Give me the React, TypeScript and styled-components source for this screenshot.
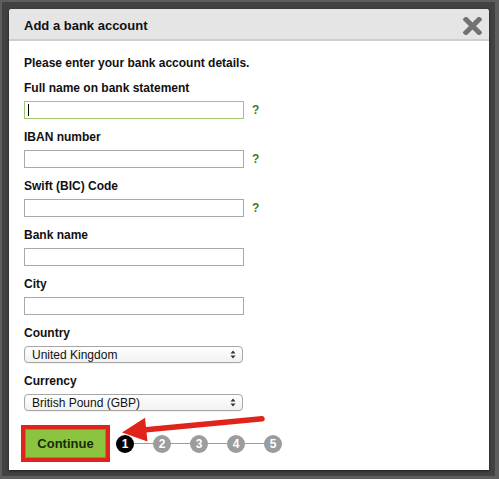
import React from "react";
import styled, {createGlobalStyle} from "styled-components";

const fields = [
	{label: "Full name on bank statement", help: true, focused: true},
	{label: "IBAN number", help: true},
	{label: "Swift (BIC) Code", help: true},
	{label: "Bank name"},
	{label: "City"},
];

const selects = [
	{label: "Country", value: "United Kingdom"},
	{label: "Currency", value: "British Pound (GBP)"},
];

const steps = [1, 2, 3, 4, 5];

const App = () => {
	return (
		<>
			<GlobalStyle/>
			<Frame>
				<Panel>
					<Header>
						<Title>Add a bank account</Title>
						<CloseButton aria-label="Close">
							<svg width="19" height="18" viewBox="0 0 19 18">
								<path d="M3 2.5 L16 15.5 M16 2.5 L3 15.5" stroke="#727272" strokeWidth="5" strokeLinecap="square"/>
							</svg>
						</CloseButton>
					</Header>
					<Body>
						<Intro>Please enter your bank account details.</Intro>
						{fields.map((f) => (
							<Field key={f.label}>
								<Label>{f.label}</Label>
								<InputRow>
									<InputBox $focused={!!f.focused}>
										{f.focused && <Caret/>}
										<TextInput type="text"/>
									</InputBox>
									{f.help && <Help>?</Help>}
								</InputRow>
							</Field>
						))}
						{selects.map((s) => (
							<Field key={s.label}>
								<Label>{s.label}</Label>
								<SelectBox>
									<Select defaultValue={s.value}>
										<option>{s.value}</option>
									</Select>
									<svg width="6" height="9" viewBox="0 0 6 9">
										<path d="M0.5 3.5 L3 0.5 L5.5 3.5 Z M0.5 5.5 L3 8.5 L5.5 5.5 Z" fill="#333"/>
									</svg>
								</SelectBox>
							</Field>
						))}
						<Footer>
							<ContinueButton>Continue</ContinueButton>
							<Steps>
								{steps.map((n, i) => (
									<React.Fragment key={n}>
										{i > 0 && <StepLine/>}
										<Step $active={n === 1}>{n}</Step>
									</React.Fragment>
								))}
							</Steps>
						</Footer>
					</Body>
					<Arrow width="160" height="40" viewBox="0 0 160 40">
						<path d="M36 24.8 L152 13.8" stroke="#e1241b" strokeWidth="5.5" strokeLinecap="round"/>
						<polygon points="12,27.5 35,12.8 37.5,36.5" fill="#e1241b"/>
					</Arrow>
				</Panel>
			</Frame>
		</>
	)
}

export default App


const GlobalStyle = createGlobalStyle`
  body {
    margin: 0;
    background: #424242;
    font-family: "Liberation Sans", Arial, Helvetica, sans-serif;
  }
`

const Frame = styled.div`
  width: 499px;
  height: 479px;
  box-sizing: border-box;
  border: 2px solid #5e5e5e;
  border-right-width: 4px;
  border-bottom-width: 3px;
  background: #424242;
  padding: 7px 6px 6px 7px;
`

const Panel = styled.div`
  position: relative;
  width: 100%;
  height: 100%;
  background: #fff;
  border-radius: 3px 3px 0 0;
  box-shadow: 0 1px 3px rgba(0, 0, 0, 0.6);
  display: flex;
  flex-direction: column;
`

const Header = styled.div`
  height: 32px;
  display: flex;
  align-items: center;
  justify-content: space-between;
  padding: 2px 7px 0 15px;
  box-sizing: border-box;
  background: #e5e5e5;
  border-bottom: 2px solid #cecece;
  border-radius: 3px 3px 0 0;
`

const Title = styled.h1`
  margin: 0;
  font-size: 13px;
  font-weight: 700;
  color: #111;
`

const CloseButton = styled.button`
  border: none;
  background: none;
  padding: 0;
  margin-top: 1px;
  display: flex;
  cursor: pointer;
`

const Body = styled.div`
  display: flex;
  flex-direction: column;
  padding: 15px 15px 0 15px;
`

const Intro = styled.p`
  margin: 0 0 10px 0;
  font-size: 12px;
  line-height: 15px;
  font-weight: 700;
  color: #111;
`

const Field = styled.div`
  display: flex;
  flex-direction: column;
  gap: 5px;
  margin-bottom: 11px;
`

const Label = styled.label`
  font-size: 12px;
  line-height: 15px;
  font-weight: 700;
  color: #111;
`

const InputRow = styled.div`
  display: flex;
  align-items: center;
`

const InputBox = styled.div<{ $focused: boolean }>`
  width: 220px;
  height: 18px;
  box-sizing: border-box;
  display: flex;
  align-items: center;
  padding-left: 3px;
  border: 1px solid ${({$focused}) => $focused ? "#9cc86a" : "#a9a9a9"};
  background: #fff;
`

const Caret = styled.span`
  width: 1px;
  height: 12px;
  background: #000;
`

const TextInput = styled.input`
  flex: 1;
  min-width: 0;
  border: none;
  outline: none;
  background: transparent;
  padding: 0;
  font-size: 12px;
  font-family: inherit;
`

const Help = styled.span`
  margin-left: 8px;
  font-size: 12px;
  font-weight: 700;
  color: #3f7b1f;
`

const SelectBox = styled.div`
  width: 219px;
  height: 17px;
  box-sizing: border-box;
  display: flex;
  align-items: center;
  padding: 0 6px 0 7px;
  border: 1px solid #a6a6a6;
  border-radius: 4px;
  background: linear-gradient(#ffffff, #f1f1f1);
  box-shadow: 0 1px 0 rgba(0, 0, 0, 0.05);
`

const Select = styled.select`
  flex: 1;
  appearance: none;
  border: none;
  outline: none;
  background: transparent;
  padding: 0;
  font-size: 12px;
  font-family: inherit;
  color: #111;
`

const Footer = styled.div`
  display: flex;
  align-items: center;
  margin-top: 7px;
  padding-left: 1px;
`

const ContinueButton = styled.button`
  width: 81px;
  height: 29px;
  border: 1px solid #6e9d33;
  background: #8bc440;
  outline: 4px solid #e1241b;
  font-family: inherit;
  font-size: 13px;
  font-weight: 700;
  color: #1b2a0e;
  padding: 0;
  cursor: pointer;
`

const Steps = styled.div`
  display: flex;
  align-items: center;
  margin-left: 10px;
`

const Step = styled.span<{ $active: boolean }>`
  width: 18px;
  height: 18px;
  border-radius: 50%;
  display: flex;
  align-items: center;
  justify-content: center;
  background: ${({$active}) => $active ? "#000" : "#9c9c9c"};
  color: #fff;
  font-size: 12px;
  font-weight: 700;
`

const StepLine = styled.span`
  width: 19px;
  height: 1px;
  background: #9c9c9c;
`

const Arrow = styled.svg`
  position: absolute;
  left: 101px;
  top: 396px;
`
